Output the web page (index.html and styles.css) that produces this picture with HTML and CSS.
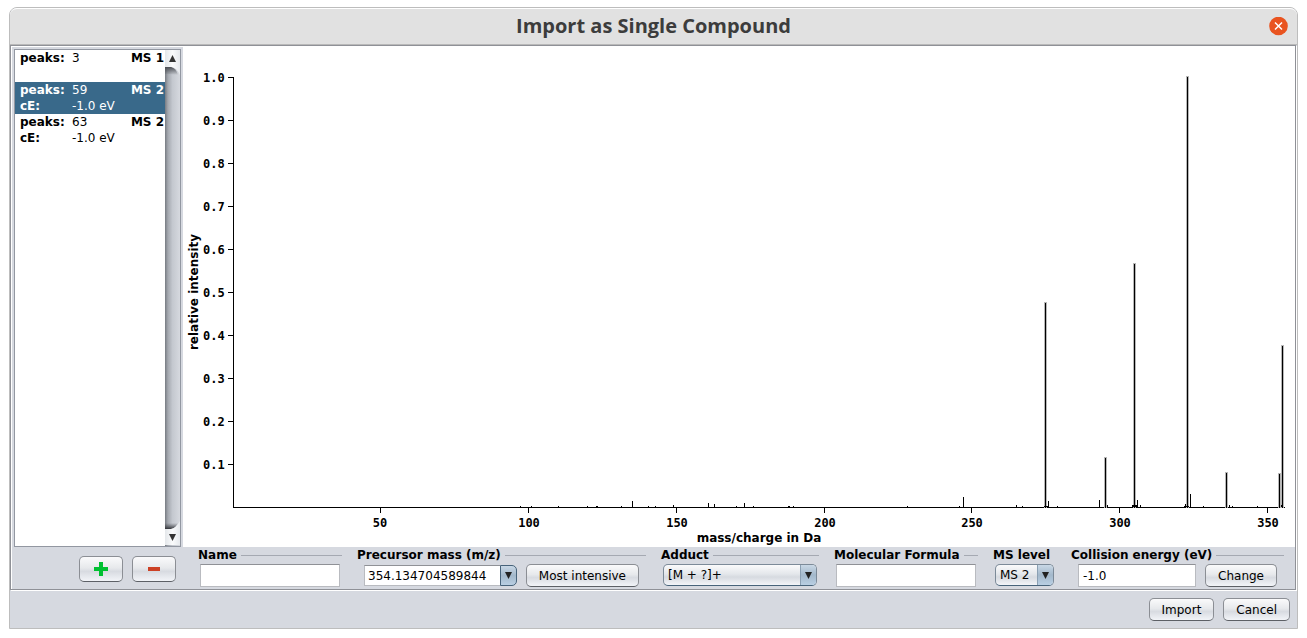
FILE: index.html
```html
<!DOCTYPE html>
<html lang="en">
<head>
<meta charset="utf-8">
<title>Import as Single Compound</title>
<link rel="stylesheet" href="styles.css">
</head>
<body>
<main class="window">
  <header class="titlebar">
    <h1 class="title">Import as Single Compound</h1>
    <button class="close" type="button" aria-label="Close">
      <svg viewBox="0 0 20 20" width="20" height="20" aria-hidden="true"><circle cx="9.500" cy="9" r="9.300" fill="#e95420"/><path d="M6 5.500l7 7M13 5.500l-7 7" stroke="#fff" stroke-width="1.500"/></svg>
    </button>
  </header>
  <section class="panel">
    <div class="spectra">
      <ul class="list">
        <li class="item"><b>peaks:</b><span>3</span><b class="level">MS 1</b></li>
        <li class="item selected"><b>peaks:</b><span>59</span><b class="level">MS 2</b><b>cE:</b><span>-1.0 eV</span></li>
        <li class="item"><b>peaks:</b><span>63</span><b class="level">MS 2</b><b>cE:</b><span>-1.0 eV</span></li>
      </ul>
      <div class="scrollbar">
        <button class="scroll-button" type="button" aria-label="Scroll up">
          <svg viewBox="0 0 15 26" width="15" height="26" aria-hidden="true"><defs><linearGradient id="su" x2="1" y2="0"><stop stop-color="#e4e7ea"/><stop offset=".5" stop-color="#fafbfc"/><stop offset="1" stop-color="#e6e9ed"/></linearGradient><linearGradient id="sh" x2="0" y2="1"><stop stop-color="#4c4f55"/><stop offset="1" stop-color="#4c4f55" stop-opacity="0"/></linearGradient></defs><path d="M0 17h6q5 1 7 8L0 24z" fill="url(#sh)"/><path d="M0 0h15v25q-3-7-8-8H0z" fill="url(#su)"/><path d="M4 12l3.500-7 3.500 7z" fill="#333"/></svg>
        </button>
        <button class="scroll-button" type="button" aria-label="Scroll down">
          <svg viewBox="0 0 15 26" width="15" height="26" aria-hidden="true"><defs><linearGradient id="sd" x2="0" y2="1"><stop stop-color="#4c4f55" stop-opacity="0"/><stop offset="1" stop-color="#33353a"/></linearGradient></defs><path d="M0 3h13q-2 5-7 6H0z" fill="url(#sd)"/><path d="M0 9h6q5-1 9-8v24H0z" fill="url(#su)"/><path d="M4 14h7l-3.500 7z" fill="#333"/></svg>
        </button>
      </div>
    </div>
    <svg class="chart" viewBox="183 46 1112 501" role="img" aria-label="Mass spectrum">
      <g shape-rendering="crispEdges">
        <path d="M233 77h1v430h-1zM233 507h1052v1h-1052z
          M228 77h5v1h-5zM228 120h5v1h-5zM228 163h5v1h-5zM228 206h5v1h-5zM228 249h5v1h-5zM228 292h5v1h-5zM228 335h5v1h-5zM228 378h5v1h-5zM228 421h5v1h-5zM228 464h5v1h-5z
          M380 508h1v5h-1zM528 508h1v5h-1zM676 508h1v5h-1zM824 508h1v5h-1zM971 508h1v5h-1zM1119 508h1v5h-1zM1267 508h1v5h-1z"/>
        <path fill="#b8b8b8" d="M1044 302h3v206h-3zM1104 457h3v51h-3zM1133 263h3v245h-3zM1186 76h3v432h-3zM1225 472h3v36h-3zM1278 473h3v35h-3zM1281 345h3v163h-3z"/>
        <path d="M1045 303h1v205h-1zM1105 458h1v50h-1zM1134 264h1v244h-1zM1187 77h1v431h-1zM1226 473h1v35h-1zM1279 474h1v34h-1zM1282 346h1v162h-1z"/>
        <path d="M632 501h1v6h-1zM708 503h1v4h-1zM714 504h1v3h-1zM744 503h1v4h-1zM963 497h1v10h-1zM1048 501h1v6h-1zM1099 500h1v7h-1zM1137 500h1v7h-1zM1190 494h1v13h-1zM673 505h1v2h-1zM1016 505h1v2h-1zM1107 505h1v2h-1zM1140 505h1v2h-1zM1185 504h1v3h-1zM1229 505h1v2h-1zM1281 505h1v2h-1z
          M520 506h1v1h-1zM531 506h1v1h-1zM558 506h1v1h-1zM587 506h1v1h-1zM596 506h2v1h-2zM621 506h1v1h-1zM648 506h1v1h-1zM655 506h1v1h-1zM736 506h1v1h-1zM753 506h1v1h-1zM788 506h2v1h-2zM793 506h1v1h-1zM907 506h1v1h-1zM959 506h1v1h-1zM1022 506h1v1h-1zM1044 506h4v1h-4zM1057 506h1v1h-1zM1132 505h6v2h-6zM1184 506h5v1h-5zM1203 506h1v1h-1zM1232 506h1v1h-1zM1257 506h1v1h-1z"/>
      </g>
      <g class="ticks">
        <text x="203" y="82">1.0</text><text x="203" y="125">0.9</text><text x="203" y="168">0.8</text><text x="203" y="211">0.7</text><text x="203" y="254">0.6</text><text x="203" y="297">0.5</text><text x="203" y="340">0.4</text><text x="203" y="383">0.3</text><text x="203" y="426">0.2</text><text x="203" y="469">0.1</text>
      </g>
      <g class="ticks centered">
        <text x="380" y="527">50</text><text x="529" y="527">100</text><text x="677" y="527">150</text><text x="825" y="527">200</text><text x="972" y="527">250</text><text x="1120" y="527">300</text><text x="1268" y="527">350</text>
      </g>
      <text class="axis-name" x="759" y="542">mass/charge in Da</text>
      <text class="axis-name" transform="translate(198 292) rotate(-90)">relative intensity</text>
    </svg>
    <div class="list-actions">
      <button class="button icon-button" type="button" aria-label="Add spectrum"><svg viewBox="0 0 14 14" width="14" height="14" aria-hidden="true"><path d="M5 0h4v5h5v4H9v5H5V9H0V5h5z" fill="#00c031"/></svg></button>
      <button class="button icon-button" type="button" aria-label="Remove spectrum"><svg viewBox="0 0 14 14" width="14" height="14" aria-hidden="true"><path d="M1 5h12v4H1z" fill="#cc4125"/></svg></button>
    </div>
    <form class="fields">
      <div class="group">
        <div class="caption"><label for="name">Name</label></div>
        <div class="controls"><input class="text" id="name" type="text"></div>
      </div>
      <div class="group">
        <div class="caption"><label for="mass">Precursor mass (m/z)</label></div>
        <div class="controls indented">
          <div class="combo"><input class="text combo-text" id="mass" type="text" value="354.134704589844"><button class="combo-button" type="button" aria-label="Show masses"><svg viewBox="0 0 7 7" width="7" height="7" aria-hidden="true"><path d="M0 0h7L3.500 7z" fill="#222"/></svg></button></div>
          <button class="button" type="button">Most intensive</button>
        </div>
      </div>
      <div class="group">
        <div class="caption"><label for="adduct">Adduct</label></div>
        <div class="controls"><div class="select"><select id="adduct"><option>[M + ?]+</option></select><span class="arrow"><svg viewBox="0 0 7 7" width="7" height="7" aria-hidden="true"><path d="M0 0h7L3.500 7z" fill="#222"/></svg></span></div></div>
      </div>
      <div class="group">
        <div class="caption"><label for="formula">Molecular Formula</label></div>
        <div class="controls"><input class="text" id="formula" type="text"></div>
      </div>
      <div class="group">
        <div class="caption plain"><label for="level">MS level</label></div>
        <div class="controls"><div class="select"><select id="level"><option>MS 2</option></select><span class="arrow"><svg viewBox="0 0 7 7" width="7" height="7" aria-hidden="true"><path d="M0 0h7L3.500 7z" fill="#222"/></svg></span></div></div>
      </div>
      <div class="group">
        <div class="caption"><label for="energy">Collision energy (eV)</label></div>
        <div class="controls indented">
          <input class="text" id="energy" type="text" value="-1.0">
          <button class="button" type="button">Change</button>
        </div>
      </div>
    </form>
  </section>
  <footer class="footer">
    <button class="button" type="button">Import</button>
    <button class="button" type="button">Cancel</button>
  </footer>
</main>
</body>
</html>
```
FILE: styles.css
```css
* { box-sizing: border-box; }
body {
  margin: 0;
  min-height: 100vh;
  padding: 7px 9px 9px;
  display: flex;
  flex-direction: column;
  background: #fff;
  color: #000;
  font: 12px/16px "DejaVu Sans", sans-serif;
}
button, input, select { font: inherit; color: inherit; margin: 0; }
.window {
  flex: 1;
  display: flex;
  flex-direction: column;
  border: 1px solid #bdbdbd;
  border-radius: 8px 8px 0 0;
  background: #d6d9e0;
}
.titlebar {
  display: grid;
  grid-template-columns: 28px 1fr 28px;
  align-items: center;
  height: 37px;
  border-top: 1px solid #fff;
  border-bottom: 1px solid #b9b9b9;
  border-radius: 7px 7px 0 0;
  background: #e1e1e1;
}
.title {
  grid-column: 2;
  margin: 0;
  padding-bottom: 2px;
  text-align: center;
  color: #3c3c3c;
  font: bold 20px/32px "Open Sans", sans-serif;
}
.close { width: 20px; height: 20px; padding: 0; border: 0; background: none; }
.close svg { display: block; }
.panel {
  flex: 1;
  display: grid;
  grid-template-columns: 172px 1fr;
  grid-template-rows: 1fr 42px;
  margin: 0 1px 1px 0;
  border: 1px solid #8f9197;
  box-shadow: 1px 1px 0 #fff, inset 1px 1px 0 #fff;
}
.spectra {
  display: grid;
  grid-template-columns: 1fr 15px;
  margin: 3px 2px 0 3px;
  border: 1px solid #9297a1;
  background: #fff;
}
.list { margin: 0; padding: 0; list-style: none; }
.item {
  display: grid;
  grid-template-columns: 52px 1fr auto;
  min-height: 32px;
  padding: 0 1px 0 5px;
}
.selected { background: #39698a; color: #fff; }
.scrollbar {
  display: flex;
  flex-direction: column;
  justify-content: space-between;
  background: linear-gradient(90deg, #777b82, #a5a9b0 20%, #c4c8cf 50%, #d6d9df);
}
.scroll-button { width: 15px; height: 26px; padding: 0; border: 0; background: none; }
.scroll-button svg { display: block; }
.chart { display: block; width: 100%; height: 100%; min-height: 0; background: #fff; }
.ticks { font: bold 12px "DejaVu Sans Mono", monospace; }
.centered, .axis-name { text-anchor: middle; }
.axis-name { font: bold 12px "DejaVu Sans", sans-serif; }
.list-actions {
  display: flex;
  justify-content: flex-end;
  align-items: flex-start;
  gap: 9px;
  padding: 9px 7px 0 0;
}
.button {
  height: 23px;
  padding: 0 12px;
  border: 1px solid #8b8e94;
  border-bottom-color: #5d6066;
  border-radius: 5px;
  background: linear-gradient(#fafafb, #e7e9ec 45%, #d8dbe1 60%, #f2f4f8);
  white-space: nowrap;
}
.icon-button { width: 44px; height: 26px; padding: 0; }
.icon-button svg { display: block; margin: 0 auto; }
.fields {
  display: grid;
  grid-template-columns: 144fr 289fr 158fr 144fr 63fr 213fr;
  gap: 15px;
  padding: 0 11px 0 15px;
}
.group { min-width: 0; }
.caption {
  display: flex;
  align-items: center;
  gap: 4px;
  height: 16px;
  font-weight: bold;
  white-space: nowrap;
}
.caption::after { content: ""; flex: 1; height: 1px; background: #a5a9b2; }
.plain::after { content: none; }
.controls {
  display: flex;
  align-items: flex-start;
  gap: 9px;
  padding: 1px 2px 0;
}
.indented { padding: 1px 7px 0; }
.text {
  flex: 1;
  min-width: 0;
  height: 23px;
  padding: 0 4px;
  border: 1px solid #b9bbc0;
  border-top-color: #8f9196;
  border-radius: 0;
  background: #fff;
}
.combo { flex: 1; display: flex; min-width: 0; padding-top: 1px; }
.combo-text { height: 21px; padding: 0 3px; border-right: 0; }
.combo-button {
  width: 17px;
  height: 21px;
  display: grid;
  place-items: center;
  padding: 0;
  border: 1px solid #47637a;
  border-radius: 0 5px 5px 0;
  background: linear-gradient(#c9d8e6, #a3b8cb 50%, #b9cfe3);
}
.select { position: relative; flex: 1; }
.select select {
  display: block;
  width: 100%;
  height: 22px;
  padding: 0 18px 0 4px;
  border: 1px solid #7c8a98;
  border-bottom-color: #47637a;
  border-radius: 5px;
  appearance: none;
  background: linear-gradient(#fafafb, #e4e7eb 45%, #d6dae0 60%, #f2f4f8);
}
.arrow {
  position: absolute;
  inset: 1px 1px 1px auto;
  width: 16px;
  display: grid;
  place-items: center;
  border-left: 1px solid #8ba0b3;
  border-radius: 0 4px 4px 0;
  background: linear-gradient(#c9d8e6, #a3b8cb 50%, #b9cfe3);
  pointer-events: none;
}
.footer {
  display: flex;
  justify-content: flex-end;
  gap: 9px;
  padding: 7px;
}
```
